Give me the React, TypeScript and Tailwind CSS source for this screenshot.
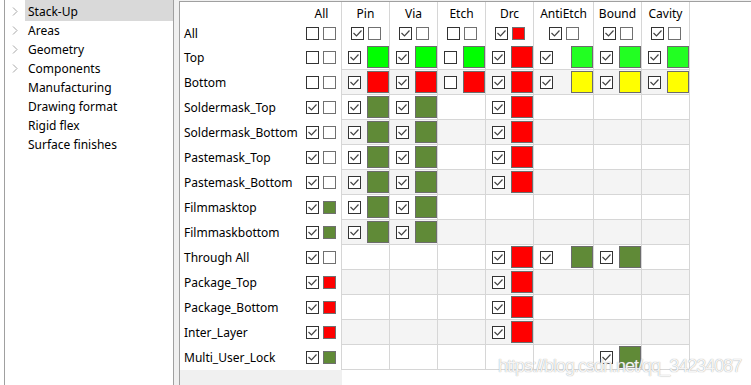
import React from 'react';

type Swatch = 'none' | 'green' | 'lime' | 'red' | 'yellow' | 'olive';
type Cell = [boolean, Swatch] | null;

const fill: Record<Swatch, string> = {
  none: 'bg-white',
  green: 'bg-[#00ff00]',
  lime: 'bg-[#22ff22]',
  red: 'bg-[#ff0000]',
  yellow: 'bg-[#ffff00]',
  olive: 'bg-[#608a37]',
};

const tree = [
  { name: 'Stack-Up', arrow: true, active: true },
  { name: 'Areas', arrow: true },
  { name: 'Geometry', arrow: true },
  { name: 'Components', arrow: true },
  { name: 'Manufacturing' },
  { name: 'Drawing format' },
  { name: 'Rigid flex' },
  { name: 'Surface finishes' },
];

const columns = [
  { title: 'Pin', w: 'w-[48px]' },
  { title: 'Via', w: 'w-[48px]' },
  { title: 'Etch', w: 'w-[48px]' },
  { title: 'Drc', w: 'w-[48px]' },
  { title: 'AntiEtch', w: 'w-[60px]' },
  { title: 'Bound', w: 'w-[48px]' },
  { title: 'Cavity', w: 'w-[48px]' },
];

const headerAll: [boolean, Swatch][] = [
  [true, 'none'],
  [true, 'none'],
  [false, 'none'],
  [true, 'red'],
  [true, 'none'],
  [true, 'none'],
  [true, 'none'],
];

const mask: Cell[] = [[true, 'olive'], [true, 'olive'], null, [true, 'red'], null, null, null];
const film: Cell[] = [[true, 'olive'], [true, 'olive'], null, null, null, null, null];
const drcOnly: Cell[] = [null, null, null, [true, 'red'], null, null, null];

const rows: { name: string; all: [boolean, Swatch]; cells: Cell[] }[] = [
  {
    name: 'Top',
    all: [false, 'none'],
    cells: [[true, 'green'], [true, 'green'], [false, 'green'], [true, 'red'], [true, 'lime'], [true, 'lime'], [true, 'lime']],
  },
  {
    name: 'Bottom',
    all: [false, 'none'],
    cells: [[true, 'red'], [true, 'red'], [false, 'red'], [true, 'red'], [true, 'yellow'], [true, 'yellow'], [true, 'yellow']],
  },
  { name: 'Soldermask_Top', all: [true, 'none'], cells: mask },
  { name: 'Soldermask_Bottom', all: [true, 'none'], cells: mask },
  { name: 'Pastemask_Top', all: [true, 'none'], cells: mask },
  { name: 'Pastemask_Bottom', all: [true, 'none'], cells: mask },
  { name: 'Filmmasktop', all: [true, 'olive'], cells: film },
  { name: 'Filmmaskbottom', all: [true, 'olive'], cells: film },
  {
    name: 'Through All',
    all: [true, 'none'],
    cells: [null, null, null, [true, 'red'], [true, 'olive'], [true, 'olive'], null],
  },
  { name: 'Package_Top', all: [true, 'red'], cells: drcOnly },
  { name: 'Package_Bottom', all: [true, 'red'], cells: drcOnly },
  { name: 'Inter_Layer', all: [true, 'red'], cells: drcOnly },
  {
    name: 'Multi_User_Lock',
    all: [true, 'olive'],
    cells: [null, null, null, null, null, [true, 'olive'], null],
  },
];

function Check({ on }: { on: boolean }) {
  return (
    <span className="w-[13px] h-[13px] shrink-0 border border-[#333] bg-white flex items-center justify-center">
      {on && (
        <svg width="11" height="11" viewBox="0 0 11 11">
          <path d="M1.5 5 L4.5 8 L9.5 2.5" fill="none" stroke="#444" strokeWidth="1.2" />
        </svg>
      )}
    </span>
  );
}

function SmallBox({ color }: { color: Swatch }) {
  return <span className={`block w-[13px] h-[13px] shrink-0 border border-[#707070] ${fill[color]}`} />;
}

function BigBox({ color }: { color: Swatch }) {
  return <span className={`block ml-auto w-[22px] h-[22px] shrink-0 border border-[#6c6c6c] ${fill[color]}`} />;
}

function Chevron() {
  return (
    <svg width="6" height="9" viewBox="0 0 6 9">
      <path d="M1 0.5 L5 4.5 L1 8.5" fill="none" stroke="#a6a6a6" strokeWidth="1" />
    </svg>
  );
}

export default function App() {
  return (
    <div className="w-[751px] h-[385px] bg-[#f0f0f0] flex overflow-hidden relative font-['Noto_Sans',sans-serif] text-[12px] text-black">
      {/* Tree */}
      <aside className="w-[174px] h-full bg-white pl-[4px]">
        <div className="h-full border-l border-r border-[#a0a0a0]">
          {tree.map((t, i) => (
            <div key={t.name} className={`flex ${i === 0 ? 'h-[21px] pt-[2px]' : 'h-[19px]'}`}>
              <div className="w-[20px] flex items-center pl-[7px]">{t.arrow && <Chevron />}</div>
              <div
                className={`flex-1 flex items-center pl-[3px] leading-[16px] ${
                  t.active ? 'bg-[#d9d9d9] -mt-[2px] pt-[2px]' : ''
                }`}
              >
                {t.name}
              </div>
            </div>
          ))}
        </div>
      </aside>

      {/* Grid */}
      <section className="ml-[5px] mt-[1px] flex-1 flex flex-col bg-white border-l border-t border-[#a0a0a0]">
        <div className="flex h-[20px]">
          <div className="w-[162px] shrink-0 border-r border-[#d6d6d6] flex justify-end pr-[5px] pt-[4px]">
            <span className="w-[29px] text-center leading-[16px]">All</span>
          </div>
          {columns.map((c) => (
            <div key={c.title} className={`${c.w} shrink-0 border-r border-[#d6d6d6] text-center pt-[4px] leading-[16px]`}>
              {c.title}
            </div>
          ))}
        </div>

        <div className="flex h-[23px]">
          <div className="w-[162px] shrink-0 border-r border-[#d6d6d6] flex items-center pl-[4px] pr-[5px]">
            <span className="flex-1 leading-[16px]">All</span>
            <div className="flex gap-[4px]">
              <Check on={false} />
              <SmallBox color="none" />
            </div>
          </div>
          {columns.map((c, i) => (
            <div key={c.title} className={`${c.w} shrink-0 border-r border-[#d6d6d6] flex items-center justify-center gap-[4px] pl-[1px]`}>
              <Check on={headerAll[i][0]} />
              <SmallBox color={headerAll[i][1]} />
            </div>
          ))}
        </div>

        {rows.map((r, ri) => (
          <div key={r.name} className="flex h-[25px]">
            <div className="w-[162px] shrink-0 border-r border-[#d6d6d6] flex items-center pl-[4px] pr-[5px]">
              <span className="flex-1 leading-[16px] whitespace-nowrap">{r.name}</span>
              <div className="flex gap-[4px]">
                <Check on={r.all[0]} />
                <SmallBox color={r.all[1]} />
              </div>
            </div>
            {columns.map((c, ci) => {
              const cell = r.cells[ci];
              return (
                <div
                  key={c.title}
                  className={`${c.w} shrink-0 border-r border-b border-[#d6d6d6] flex items-center pl-[6px] ${
                    ri % 2 === 1 ? 'bg-[#f4f4f4]' : 'bg-white'
                  }`}
                >
                  {cell && (
                    <>
                      <Check on={cell[0]} />
                      <BigBox color={cell[1]} />
                    </>
                  )}
                </div>
              );
            })}
          </div>
        ))}

        <div className="flex flex-1">
          <div className="w-[162px] shrink-0 bg-[#f0f0f0]" />
          <div className="flex-1 bg-white" />
        </div>
      </section>

      <div className="absolute left-[498px] top-[357px] font-['Liberation_Sans',sans-serif] text-[18px] leading-[18px] tracking-[-1px] text-white/90 whitespace-nowrap [text-shadow:0_0_1px_#8a8a8a]">
        https://blog.csdn.net/qq_34234087
      </div>
    </div>
  );
}
